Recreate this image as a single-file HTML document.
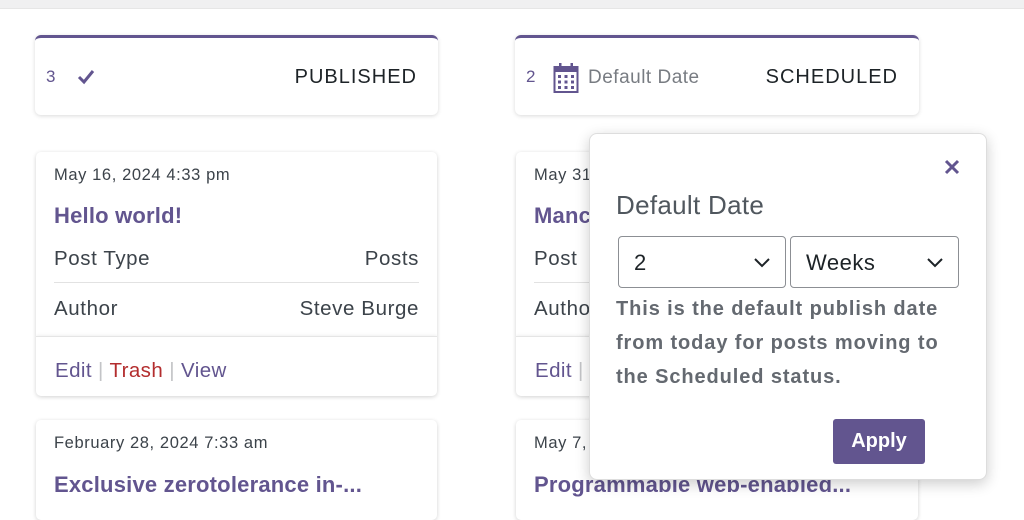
<!DOCTYPE html>
<html><head><meta charset="utf-8"><style>
*{box-sizing:border-box;margin:0;padding:0}
body{width:1024px;height:507px;overflow:hidden;background:#fff;font-family:"Liberation Sans",sans-serif;position:relative;color:#3c434a}
.top{position:absolute;left:0;top:0;width:1024px;height:9px;background:#f0f0f1;border-bottom:1px solid #e6e6e6}
.hdr{position:absolute;top:35px;height:80px;background:#fff;border-radius:6px;border-top:3px solid #62558f;box-shadow:0 1px 4px rgba(0,0,0,.15)}
.hdr .n{position:absolute;left:11px;top:29px;font-size:17px;color:#62558f}
.hdr .t{position:absolute;right:21px;top:28px;font-size:20px;color:#1d2327;letter-spacing:1px}
.card{position:absolute;background:#fff;border-radius:5px;box-shadow:0 1px 4px rgba(0,0,0,.18);overflow:hidden}
.date{position:absolute;left:18px;top:14px;font-size:16.5px;color:#3c434a;letter-spacing:.6px}
.title{position:absolute;left:18px;top:51px;font-size:22px;color:#62558f;font-weight:bold;letter-spacing:.2px}
.row{position:absolute;left:18px;right:18px;font-size:20.5px;color:#3c434a;letter-spacing:.6px}
.row span{float:right}
.foot{position:absolute;left:0;right:0;top:184px;height:60px;border-top:1px solid #e5e5e5;box-shadow:0 -1px 3px rgba(0,0,0,.06)}
.links{position:absolute;left:19px;top:22px;font-size:20.5px;color:#c3c4c7;letter-spacing:.4px}
.pop{position:absolute;left:589px;top:133px;width:398px;height:347px;background:#fff;border-radius:8px;border:1px solid #ddd;box-shadow:0 4px 14px rgba(0,0,0,.2)}
.sel{position:absolute;top:102px;height:52px;border:1px solid #8c8f94;border-radius:4px;font-size:22px;color:#1d2327;padding:13px 0 0 15px;letter-spacing:.5px}
.sel svg{position:absolute;right:14px;top:20px}
</style></head><body>
<div class="top"></div>

<div class="hdr" style="left:35px;width:403px">
<div class="n">3</div>
<svg style="position:absolute;left:42px;top:31px" width="18" height="16" viewBox="0 0 18 16"><path d="M2 8 L7 13 L16 2" fill="none" stroke="#62558f" stroke-width="3"/></svg>
<div class="t">PUBLISHED</div></div>

<div class="hdr" style="left:515px;width:404px">
<div class="n">2</div>
<svg style="position:absolute;left:38px;top:24px" width="26" height="32" viewBox="0 0 26 32"><rect x="1.5" y="5" width="23" height="25" fill="none" stroke="#62558f" stroke-width="2"/><rect x="1.5" y="5" width="23" height="5" fill="#62558f"/><rect x="6" y="1" width="2.5" height="6" fill="#62558f"/><rect x="17.5" y="1" width="2.5" height="6" fill="#62558f"/><g fill="#62558f"><rect x="5" y="13" width="3" height="3"/><rect x="11.5" y="13" width="3" height="3"/><rect x="18" y="13" width="3" height="3"/><rect x="5" y="18.5" width="3" height="3"/><rect x="11.5" y="18.5" width="3" height="3"/><rect x="18" y="18.5" width="3" height="3"/><rect x="5" y="24" width="3" height="3"/><rect x="11.5" y="24" width="3" height="3"/><rect x="18" y="24" width="3" height="3"/></g></svg>
<div style="position:absolute;left:73px;top:29px;font-size:19px;color:#787c82;letter-spacing:.5px">Default Date</div>
<div class="t">SCHEDULED</div></div>

<div class="card" style="left:36px;top:152px;width:401px;height:244px">
<div class="date">May 16, 2024 4:33 pm</div>
<div class="title">Hello world!</div>
<div class="row" style="top:95px">Post Type<span>Posts</span></div>
<div style="position:absolute;left:18px;right:18px;top:130px;border-top:1px solid #e2e2e2"></div>
<div class="row" style="top:145px">Author<span>Steve Burge</span></div>
<div class="foot"><div class="links"><span style="color:#62558f">Edit</span> | <span style="color:#b32d2e">Trash</span> | <span style="color:#62558f">View</span></div></div>
</div>

<div class="card" style="left:36px;top:420px;width:401px;height:100px">
<div class="date">February 28, 2024 7:33 am</div>
<div class="title" style="top:52px">Exclusive zerotolerance in-...</div>
</div>

<div class="card" style="left:516px;top:152px;width:402px;height:244px">
<div class="date">May 31</div>
<div class="title">Manc</div>
<div class="row" style="top:95px">Post</div>
<div style="position:absolute;left:18px;right:18px;top:130px;border-top:1px solid #e2e2e2"></div>
<div class="row" style="top:145px">Autho</div>
<div class="foot"><div class="links"><span style="color:#62558f">Edit</span> |</div></div>
</div>

<div class="card" style="left:516px;top:420px;width:402px;height:100px">
<div class="date">May 7,</div>
<div class="title" style="top:52px">Programmable web-enabled...</div>
</div>

<div class="pop">
<svg style="position:absolute;left:354px;top:25px" width="16" height="16" viewBox="0 0 16 16"><path d="M2 2L14 14M14 2L2 14" stroke="#62558f" stroke-width="3"/></svg>
<div style="position:absolute;left:26px;top:56px;font-size:26px;color:#50575e;letter-spacing:.3px">Default Date</div>
<div class="sel" style="left:28px;width:168px">2<svg width="18" height="11" viewBox="0 0 18 11"><path d="M2 2L9 9L16 2" fill="none" stroke="#1d2327" stroke-width="2"/></svg></div>
<div class="sel" style="left:200px;width:169px">Weeks<svg width="18" height="11" viewBox="0 0 18 11"><path d="M2 2L9 9L16 2" fill="none" stroke="#1d2327" stroke-width="2"/></svg></div>
<div style="position:absolute;left:26px;top:158px;width:340px;font-size:20px;line-height:34px;color:#646970;font-weight:bold;letter-spacing:.9px">This is the default publish date from today for posts moving to the Scheduled status.</div>
<div style="position:absolute;left:243px;top:285px;width:92px;height:45px;background:#62558f;border-radius:3px;color:#fff;font-size:20px;font-weight:bold;text-align:center;line-height:45px">Apply</div>
</div>
</body></html>
